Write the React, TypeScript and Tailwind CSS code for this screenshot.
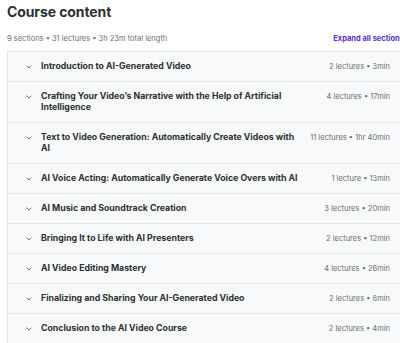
import { ChevronDown } from "lucide-react";

const sections = [
  { title: "Introduction to AI-Generated Video", meta: "2 lectures • 3min" },
  { title: "Crafting Your Video’s Narrative with the Help of Artificial Intelligence", meta: "4 lectures • 17min" },
  { title: "Text to Video Generation: Automatically Create Videos with AI", meta: "11 lectures • 1hr 40min" },
  { title: "AI Voice Acting: Automatically Generate Voice Overs with AI", meta: "1 lecture • 13min" },
  { title: "AI Music and Soundtrack Creation", meta: "3 lectures • 20min" },
  { title: "Bringing It to Life with AI Presenters", meta: "2 lectures • 12min" },
  { title: "AI Video Editing Mastery", meta: "4 lectures • 26min" },
  { title: "Finalizing and Sharing Your AI-Generated Video", meta: "2 lectures • 8min" },
  { title: "Conclusion to the AI Video Course", meta: "2 lectures • 4min" },
];

export default function App() {
  return (
    <div
      className="w-[400px] h-[343px] overflow-hidden bg-white text-[#2d2f31]"
      style={{ fontFamily: "Inter, 'Noto Sans', sans-serif" }}
    >
      <div className="pl-[7px] pt-[2px]">
        <h1 className="text-[14px] leading-[20px] font-bold tracking-[-0.1px]">Course content</h1>
        <div className="flex items-center justify-between mt-[12px] h-[10px] whitespace-nowrap">
          <span className="text-[7.5px] text-[#6a6f73]">9 sections • 31 lectures • 3h 23m total length</span>
          <span className="text-[7.5px] font-bold text-[#5a2ed2] mr-[-4px]">Expand all sections</span>
        </div>
        <div className="mt-[7px] border-l border-t border-[#e4e8eb]">
          {sections.map((s) => (
            <div
              key={s.title}
              className="flex items-start bg-[#f7f9fa] border-b border-[#e4e8eb] py-[9px] pl-[17px] pr-[10px]"
            >
              <ChevronDown size={8} strokeWidth={2} className="mt-[1.5px] text-[#2d2f31] shrink-0" />
              <div className="ml-[8px] w-[259px] text-[8.75px] leading-[11px] font-bold">{s.title}</div>
              <div className="ml-auto text-[7.5px] leading-[11px] text-[#6a6f73] whitespace-nowrap">{s.meta}</div>
            </div>
          ))}
        </div>
      </div>
    </div>
  );
}
